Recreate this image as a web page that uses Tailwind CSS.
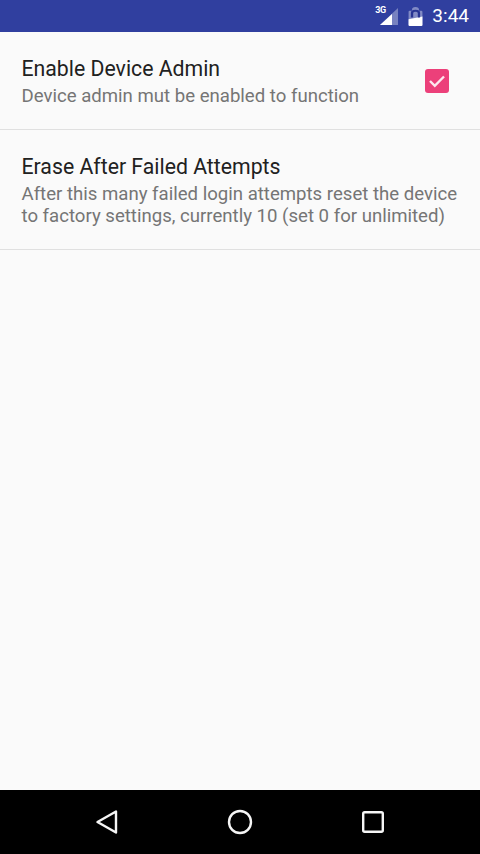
<!DOCTYPE html>
<html>
<head>
<script src="https://cdn.jsdelivr.net/npm/@tailwindcss/browser@4"></script>
</head>
<body class="m-0">
<div class="w-[480px] h-[854px] flex flex-col bg-[#fafafa] font-['Roboto',sans-serif] overflow-hidden">
  <div class="h-8 bg-[#303f9f] flex items-center justify-end shrink-0 pr-[11px]">
    <div class="relative w-[24px] h-[24px] mr-[10px]">
      <span class="absolute left-[1px] top-[2px] text-[9px] leading-[9px] font-bold text-white tracking-[-0.5px]">3G</span>
      <svg class="absolute left-0 top-0" width="24" height="24" viewBox="0 0 24 24"><path d="M24 4V21H6z" fill="#fff" fill-opacity="0.35"/><path d="M18 10V21H6z" fill="#fff"/></svg>
    </div>
    <svg class="mr-[9px]" width="15" height="19" viewBox="1.500 1 13 20" preserveAspectRatio="none"><path d="M3 5h2V3.500C5 2 6 1 8 1s3 1 3 2.500V5h2a1 1 0 0 1 1 1v14a1 1 0 0 1-1 1H3a1 1 0 0 1-1-1V6a1 1 0 0 1 1-1z" fill="#fff" fill-opacity="0.4"/><path d="M2 14l12-3v9a1 1 0 0 1-1 1H3a1 1 0 0 1-1-1z" fill="#fff"/><path d="M5 12V7.500C5 6 6 5 8 5s3 1 3 2.500V12" fill="none" stroke="#283593" stroke-width="2"/></svg>
    <span class="text-white text-[19px] leading-[32px] font-normal">3:44</span>
  </div>
  <div class="flex-1">
    <div class="h-[98px] flex items-start justify-between border-b border-[#e0e0e0] pl-[21.500px] pr-[31px] pt-[23px]">
      <div>
        <div class="text-[21.250px] leading-[28px] text-[#212121]">Enable Device Admin</div>
        <div class="text-[18.600px] leading-[26px] text-[#757575]">Device admin mut be enabled to function</div>
      </div>
      <div class="w-6 h-6 rounded-[3px] bg-[#ec407a] flex items-center justify-center mt-[14px] shrink-0">
        <svg width="24" height="24" viewBox="0 0 24 24"><path d="M5 12l4.800 4.800L19 7.500" fill="none" stroke="#fde8ef" stroke-width="2.400"/></svg>
      </div>
    </div>
    <div class="h-[120px] border-b border-[#e0e0e0] pl-[21.500px] pr-[16px] pt-[23px]">
      <div class="text-[21.250px] leading-[28px] text-[#212121]">Erase After Failed Attempts</div>
      <div class="text-[18.600px] leading-[22px] text-[#757575] whitespace-nowrap mt-[2px]">After this many failed login attempts reset the device<br>to factory settings, currently 10 (set 0 for unlimited)</div>
    </div>
  </div>
  <div class="h-[64px] bg-black flex items-center shrink-0 pl-[94px]">
    <svg width="26" height="28" viewBox="0 0 26 28"><path d="M22 3.500V24.500L3.500 14z" fill="none" stroke="#f5f5f5" stroke-width="2.400" stroke-linejoin="round"/></svg>
    <svg class="ml-[107px]" width="26" height="26" viewBox="0 0 26 26"><circle cx="13" cy="13" r="11" fill="none" stroke="#f5f5f5" stroke-width="2.400"/></svg>
    <svg class="ml-[108px]" width="24" height="24" viewBox="0 0 24 24"><rect x="2.200" y="2.200" width="19.600" height="19.600" rx="1.500" fill="none" stroke="#f5f5f5" stroke-width="2.400"/></svg>
  </div>
</div>
</body>
</html>
